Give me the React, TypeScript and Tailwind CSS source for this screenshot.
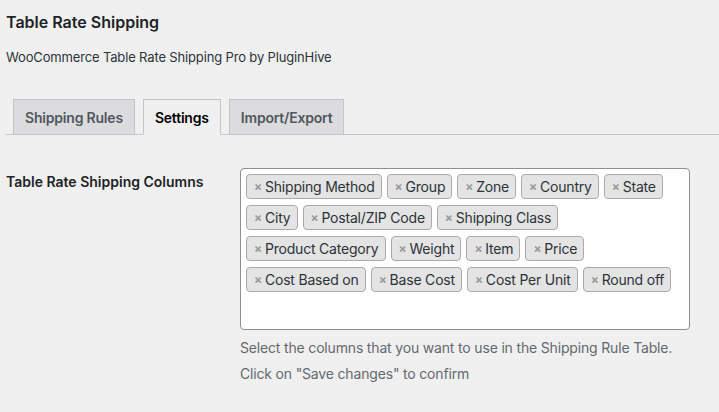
import React from 'react'

const columns = [
  'Shipping Method',
  'Group',
  'Zone',
  'Country',
  'State',
  'City',
  'Postal/ZIP Code',
  'Shipping Class',
  'Product Category',
  'Weight',
  'Item',
  'Price',
  'Cost Based on',
  'Base Cost',
  'Cost Per Unit',
  'Round off',
]

const tabs = [
  { label: 'Shipping Rules', active: false },
  { label: 'Settings', active: true },
  { label: 'Import/Export', active: false },
]

function Tag({ label }: { label: string }) {
  return (
    <span className="flex h-[25px] items-center rounded-[4px] border border-[#aaaaaa] bg-[#e4e4e4] pl-[7px] pr-[6px] text-[14px] tracking-[-0.2px] text-[#2c3338]">
      <span className="mr-[3px] text-[12px] font-bold leading-none text-[#999999]">×</span>
      {label}
    </span>
  )
}

export default function App() {
  return (
    <div
      className="h-[412px] w-[719px] overflow-hidden bg-[#f0f0f1] pl-[6px] text-[#1d2327]"
      style={{ fontFamily: 'Inter, "Liberation Sans", sans-serif' }}
    >
      <h1 className="pt-[12px] text-[16px] font-semibold leading-[20px]">Table Rate Shipping</h1>
      <p className="mt-[16px] text-[13px] leading-[18px] tracking-[-0.15px] text-[#2c3338]">
        WooCommerce Table Rate Shipping Pro by PluginHive
      </p>

      {/* tabs */}
      <nav className="mt-[33px] flex gap-[8px] border-b border-[#c3c4c7] pl-[7px]">
        {tabs.map((t) => (
          <div
            key={t.label}
            className={
              t.active
                ? 'mb-[-1px] flex h-[36px] items-center border border-b-[#f0f0f1] border-[#c3c4c7] bg-[#f0f0f1] px-[11px] text-[14px] font-semibold tracking-[-0.2px] text-black'
                : 'flex h-[35px] items-center border border-b-0 border-[#c3c4c7] bg-[#dcdcde] px-[11px] text-[14px] font-semibold tracking-[-0.2px] text-[#50575e]'
            }
          >
            {t.label}
          </div>
        ))}
      </nav>

      <div className="mt-[33px] flex">
        <div className="w-[234px] pt-[5px] text-[14px] font-semibold leading-[18px]">
          Table Rate Shipping Columns
        </div>
        <div>
          <div className="flex h-[162px] w-[450px] flex-wrap content-start gap-x-[5px] gap-y-[6px] rounded-[4px] border border-[#8c8f94] bg-white px-[5px] pt-[5px]">
            {columns.map((c) => (
              <Tag key={c} label={c} />
            ))}
          </div>
          <p className="mt-[8px] text-[14px] leading-[20px] tracking-[-0.17px] text-[#646970]">
            Select the columns that you want to use in the Shipping Rule Table.
          </p>
          <p className="mt-[6px] text-[14px] leading-[20px] tracking-[-0.17px] text-[#646970]">
            Click on "Save changes" to confirm
          </p>
        </div>
      </div>
    </div>
  )
}
